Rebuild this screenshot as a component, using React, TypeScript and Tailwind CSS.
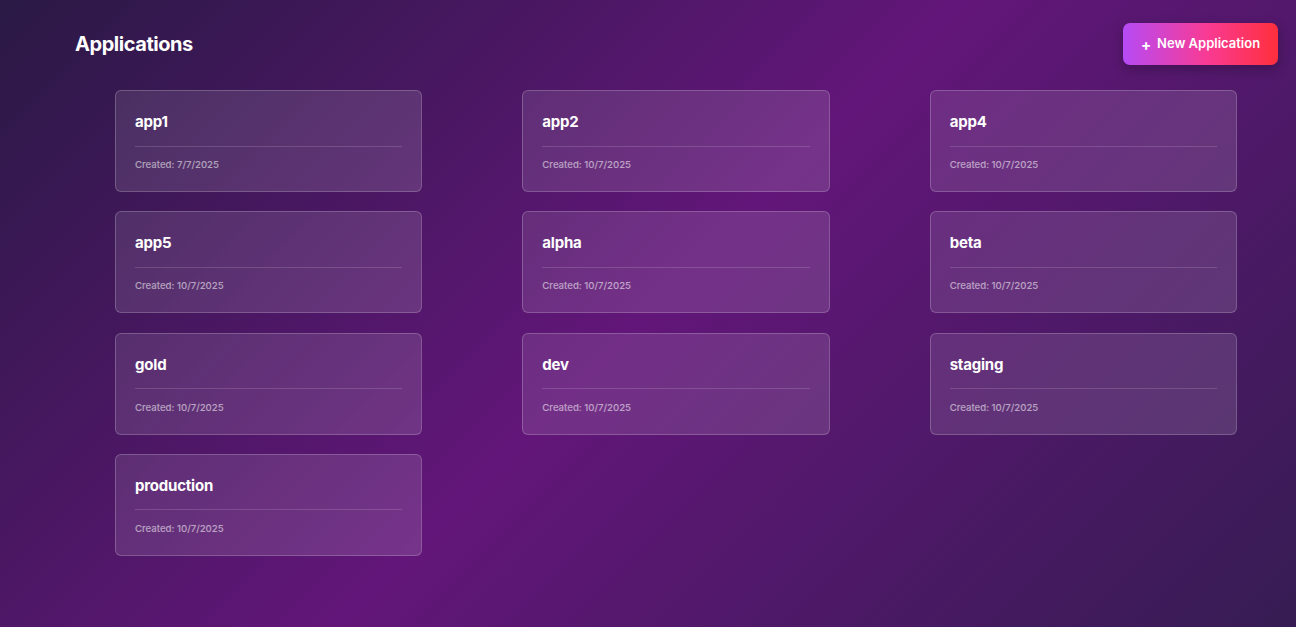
import React from "react";

const apps = [
  { name: "app1", date: "7/7/2025" },
  { name: "app2", date: "10/7/2025" },
  { name: "app4", date: "10/7/2025" },
  { name: "app5", date: "10/7/2025" },
  { name: "alpha", date: "10/7/2025" },
  { name: "beta", date: "10/7/2025" },
  { name: "gold", date: "10/7/2025" },
  { name: "dev", date: "10/7/2025" },
  { name: "staging", date: "10/7/2025" },
  { name: "production", date: "10/7/2025" },
];

export default function App() {
  return (
    <div
      className="min-h-[627px] w-full bg-[linear-gradient(135deg,#2a1945_0%,#621679_50%,#361c53_100%)] text-white"
      style={{ fontFamily: "Inter, 'Noto Sans', sans-serif" }}
    >
      <div className="flex items-center justify-between pl-[75px] pr-[18px] pt-[23px]">
        <h1 className="text-[20px] font-bold leading-[42px] tracking-[-0.45px]">Applications</h1>
        <button className="flex h-[42px] w-[155px] items-center justify-center gap-[6px] rounded-[7px] bg-[linear-gradient(90deg,#b64bf6_0%,#f93a92_55%,#ff2f3c_100%)] text-[13px] font-semibold shadow-[0_4px_12px_rgba(0,0,0,0.25)]">
          <span className="text-[15px] font-bold leading-none">+</span>
          <span>New Application</span>
        </button>
      </div>
      <div className="ml-[115px] mr-[59px] mt-[25px] grid grid-cols-3 gap-x-[100px] gap-y-[19.3px]">
        {apps.map((a) => (
          <div
            key={a.name}
            className="h-[102px] rounded-[6px] border border-white/20 bg-[linear-gradient(135deg,rgba(255,255,255,0.1),rgba(255,255,255,0.13))] px-[19px] pt-[19px]"
          >
            <div className="text-[15px] font-bold leading-[24px] tracking-[-0.2px]">{a.name}</div>
            <div className="mt-[11.5px] h-px bg-white/15" />
            <div className="mt-[10.5px] text-[9.6px] font-medium leading-[15px] text-white/55">Created: {a.date}</div>
          </div>
        ))}
      </div>
    </div>
  );
}
